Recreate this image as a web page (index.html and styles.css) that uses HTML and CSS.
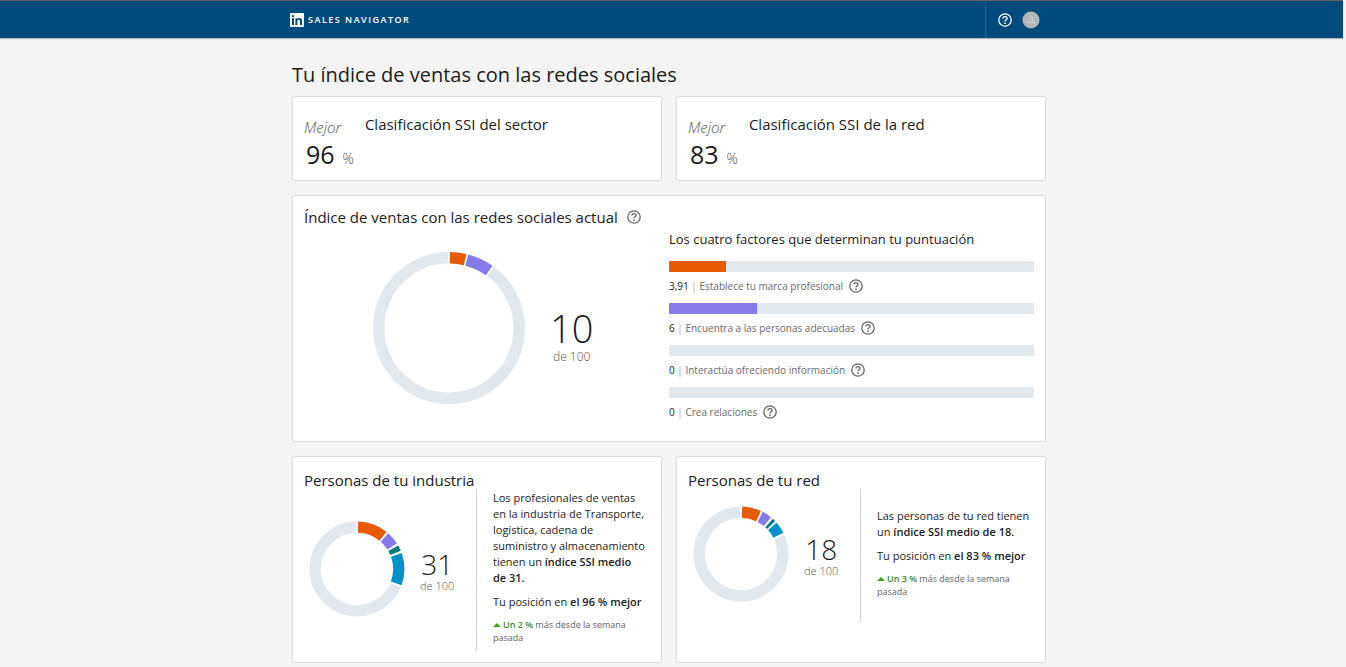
FILE: index.html
```html
<!DOCTYPE html>
<html lang="es">
<head>
<meta charset="utf-8">
<title>Sales Navigator</title>
<link rel="stylesheet" href="styles.css">
</head>
<body>
<svg class="sprite" aria-hidden="true">
  <symbol id="help" viewBox="0 0 14 14">
    <circle cx="7" cy="7" r="6.2" fill="none" stroke="currentColor" stroke-width="1.3"/>
    <path d="M4.9 5.6C4.9 4.3 5.8 3.6 7 3.6S9.1 4.3 9.1 5.4C9.1 6.8 7 6.7 7 8.4" fill="none" stroke="currentColor" stroke-width="1.3"/>
    <circle cx="7" cy="10.2" r=".85" fill="currentColor"/>
  </symbol>
</svg>
<header class="topbar">
  <div class="topbar-inner">
    <a class="brand" href="#">
      <svg class="brand-logo" viewBox="0 0 14 14" aria-hidden="true">
        <rect width="14" height="14" rx="1" fill="#fff"/>
        <path d="M2 5.3h2V12H2zM3 2a1.15 1.15 0 1 1 0 2.3A1.15 1.15 0 0 1 3 2zM5.4 5.3h1.9v.9c.4-.7 1.1-1.1 2-1.1 2 0 2.7 1.2 2.7 3.2V12h-2V8.600c0-1-.2-1.800-1.200-1.800S7.400 7.600 7.400 8.500V12h-2z" fill="#004b7c"/>
      </svg>
      <span>SALES NAVIGATOR</span>
    </a>
    <div class="topbar-actions">
      <button class="help help-light" type="button" aria-label="Ayuda"><svg><use href="#help"/></svg></button>
      <button class="avatar" type="button" aria-label="Perfil">
        <svg viewBox="0 0 18 18"><circle cx="9" cy="9" r="8.500" fill="#b3b6b9"/><path d="M9 5.500a1.600 1.600 0 0 1 1 2.900c-.3.300-.2.800.2 1l1.500.9c.4.200.6.500.6 1.200H5.700c0-.7.200-1 .6-1.200l1.500-.9c.4-.2.500-.7.200-1a1.600 1.600 0 0 1 1-2.900z" fill="none" stroke="#d5d7d9" stroke-width=".9"/></svg>
      </button>
    </div>
  </div>
</header>
<main class="page">
  <h1 class="page-title">Tu índice de ventas con las redes sociales</h1>
  <div class="grid">
    <section class="card rank">
      <div class="rank-score"><em>Mejor</em><p><span class="rank-num">96</span> <span class="rank-pct">%</span></p></div>
      <h2 class="card-title">Clasificación SSI del sector</h2>
    </section>
    <section class="card rank">
      <div class="rank-score"><em>Mejor</em><p><span class="rank-num">83</span> <span class="rank-pct">%</span></p></div>
      <h2 class="card-title">Clasificación SSI de la red</h2>
    </section>

    <section class="card current">
      <div class="current-left">
        <div class="title-row">
          <h2 class="card-title">Índice de ventas con las redes sociales actual</h2>
          <button class="help" type="button" aria-label="Más información"><svg><use href="#help"/></svg></button>
        </div>
        <div class="current-chart">
          <svg class="donut-large" viewBox="0 0 152 152" role="img" aria-label="10 de 100">
            <g transform="rotate(-90 76 76)" fill="none" stroke-width="11.500">
              <circle cx="76" cy="76" r="70.200" pathLength="100" stroke="#e1e8ee" stroke-dasharray="89.700 10.300" stroke-dashoffset="-10.100"/>
              <circle cx="76" cy="76" r="70.200" pathLength="100" stroke="#e65a00" stroke-dasharray="3.500 96.500" stroke-dashoffset="-.2"/>
              <circle cx="76" cy="76" r="70.200" pathLength="100" stroke="#867be8" stroke-dasharray="5.600 94.400" stroke-dashoffset="-4.100"/>
            </g>
          </svg>
          <div class="score score-large"><strong>10</strong><span>de 100</span></div>
        </div>
      </div>
      <div class="factors">
        <h3 class="factors-title">Los cuatro factores que determinan tu puntuación</h3>
        <ul>
          <li><div class="bar"><div class="bar-fill orange" style="width:15.640%"></div></div>
            <div class="factor"><span><b>3,91</b> <i>|</i> Establece tu marca profesional</span><button class="help" type="button" aria-label="Más información"><svg><use href="#help"/></svg></button></div></li>
          <li><div class="bar"><div class="bar-fill purple" style="width:24%"></div></div>
            <div class="factor"><span><b>6</b> <i>|</i> Encuentra a las personas adecuadas</span><button class="help" type="button" aria-label="Más información"><svg><use href="#help"/></svg></button></div></li>
          <li><div class="bar"></div>
            <div class="factor"><span><b>0</b> <i>|</i> Interactúa ofreciendo información</span><button class="help" type="button" aria-label="Más información"><svg><use href="#help"/></svg></button></div></li>
          <li><div class="bar"></div>
            <div class="factor"><span><b>0</b> <i>|</i> Crea relaciones</span><button class="help" type="button" aria-label="Más información"><svg><use href="#help"/></svg></button></div></li>
        </ul>
      </div>
    </section>

    <section class="card people">
      <h2 class="card-title">Personas de tu industria</h2>
      <div class="people-body">
        <div class="people-chart">
          <svg class="donut-small" viewBox="0 0 96 96" role="img" aria-label="31 de 100">
            <g transform="rotate(-90 48 48)" fill="none" stroke-width="11.300">
              <circle cx="48" cy="48" r="41.800" pathLength="100" stroke="#e1e8ee" stroke-dasharray="68.300 31.700" stroke-dashoffset="-31.300"/>
              <circle cx="48" cy="48" r="41.800" pathLength="100" stroke="#e65a00" stroke-dasharray="10.300 89.700" stroke-dashoffset="-.4"/>
              <circle cx="48" cy="48" r="41.800" pathLength="100" stroke="#867be8" stroke-dasharray="4.500 95.500" stroke-dashoffset="-11.400"/>
              <circle cx="48" cy="48" r="41.800" pathLength="100" stroke="#067a87" stroke-dasharray="2 98" stroke-dashoffset="-16.700"/>
              <circle cx="48" cy="48" r="41.800" pathLength="100" stroke="#0091ca" stroke-dasharray="11.100 88.900" stroke-dashoffset="-19.500"/>
            </g>
          </svg>
          <div class="score"><strong>31</strong><span>de 100</span></div>
        </div>
        <div class="people-text">
          <p>Los profesionales de ventas en la industria de Transporte, logística, cadena de suministro y almacenamiento tienen un <b>índice SSI medio de&nbsp;31.</b></p>
          <p>Tu posición en <b>el 96 % mejor</b></p>
          <p class="trend"><span class="up" aria-hidden="true"></span><b>Un 2 %</b> más desde la semana pasada</p>
        </div>
      </div>
    </section>
    <section class="card people">
      <h2 class="card-title">Personas de tu red</h2>
      <div class="people-body">
        <div class="people-chart">
          <svg class="donut-small" viewBox="0 0 96 96" role="img" aria-label="18 de 100">
            <g transform="rotate(-90 48 48)" fill="none" stroke-width="11.300">
              <circle cx="48" cy="48" r="41.800" pathLength="100" stroke="#e1e8ee" stroke-dasharray="81.300 18.700" stroke-dashoffset="-18.300"/>
              <circle cx="48" cy="48" r="41.800" pathLength="100" stroke="#e65a00" stroke-dasharray="6.500 93.500" stroke-dashoffset="-.4"/>
              <circle cx="48" cy="48" r="41.800" pathLength="100" stroke="#867be8" stroke-dasharray="3.300 96.700" stroke-dashoffset="-7.600"/>
              <circle cx="48" cy="48" r="41.800" pathLength="100" stroke="#067a87" stroke-dasharray="1.100 98.900" stroke-dashoffset="-11.700"/>
              <circle cx="48" cy="48" r="41.800" pathLength="100" stroke="#0091ca" stroke-dasharray="4.100 95.900" stroke-dashoffset="-13.500"/>
            </g>
          </svg>
          <div class="score"><strong>18</strong><span>de 100</span></div>
        </div>
        <div class="people-text">
          <p>Las personas de tu red tienen un <b>índice SSI medio de 18.</b></p>
          <p>Tu posición en <b>el 83 % mejor</b></p>
          <p class="trend"><span class="up" aria-hidden="true"></span><b>Un 3 %</b> más desde la semana pasada</p>
        </div>
      </div>
    </section>
  </div>
</main>
</body>
</html>
```
FILE: styles.css
```css
* { box-sizing: border-box; }
body {
  margin: 0;
  padding-right: 3px;
  background: #f4f4f4;
  color: #1b1b1b;
  font-family: "Open Sans", "Noto Sans", sans-serif;
  font-size: 12px;
}
h1, h2, h3, p, ul { margin: 0; padding: 0; font-weight: 400; }
ul { list-style: none; }
button { padding: 0; border: 0; background: none; cursor: pointer; }
svg { display: block; }
b { font-weight: 600; }
.sprite { position: absolute; width: 0; height: 0; }

.topbar {
  background: #004b7c;
  border-top: 1px solid #5f6062;
  box-shadow: 0 1px 1px #b4b8bb;
}
.topbar-inner {
  display: flex;
  justify-content: space-between;
  max-width: 763px;
  height: 37px;
  margin: 0 auto;
}
.brand {
  display: flex;
  align-items: center;
  gap: 4px;
  color: #fff;
  font-size: 9px;
  font-weight: 600;
  letter-spacing: 1.500px;
  text-decoration: none;
}
.brand-logo { width: 14px; height: 14px; }
.topbar-actions {
  display: flex;
  align-items: center;
  gap: 10px;
  padding: 0 13px 0 12px;
  border-left: 1px solid #246592;
}
.help { flex: none; width: 14px; height: 14px; color: #666; }
.help svg { width: 100%; height: 100%; }
.help-light { color: #fff; }
.avatar svg { width: 18px; height: 18px; }

.page { max-width: 763px; margin: 0 auto; padding: 23px 7px 4px 2px; }
.page-title { margin-bottom: 7px; font-size: 20px; line-height: 28px; }
.grid { display: grid; grid-template-columns: 1fr 1fr; gap: 14px; }
.card {
  padding: 10px 11px;
  background: #fff;
  border: 1px solid #dcdcdc;
  border-radius: 2px;
}
.card-title { font-size: 15px; line-height: 22px; }

.rank { display: flex; gap: 11px; padding: 16px 11px 13px; }
.rank-score em { display: block; color: #555; font-size: 15px; font-weight: 300; line-height: 28px; }
.rank-score p { display: flex; align-items: baseline; gap: 8px; padding-left: 2px; line-height: 26px; }
.rank-num { font-size: 25px; }
.rank-pct { color: #555; font-size: 14px; font-weight: 300; line-height: 14px; }

.current { grid-column: 1 / -1; display: grid; grid-template-columns: 365px 1fr; padding-bottom: 12px; }
.title-row { display: flex; align-items: center; gap: 9px; }
.current-chart { display: flex; align-items: center; gap: 25px; padding: 24px 0 0 69px; }
.donut-large { width: 152px; height: 152px; }
.score { display: flex; flex-direction: column; align-items: center; padding-top: 4px; color: #555; }
.score strong { color: #1b1b1b; font-size: 28px; font-weight: 300; line-height: 30px; }
.score span { font-size: 11px; font-weight: 300; line-height: 14px; }
.score-large { padding-top: 13px; }
.score-large strong { font-size: 38px; line-height: 44px; }
.score-large span { font-size: 12px; }

.factors { padding-top: 24px; }
.factors-title { margin-bottom: 12px; font-size: 13px; font-weight: 500; line-height: 19px; }
.bar { height: 11px; overflow: hidden; border-radius: 1px; background: #e1e8ee; }
.bar-fill { height: 100%; }
.orange { background: #e65a00; }
.purple { background: #867be8; }
.factor { display: flex; align-items: center; gap: 6px; height: 31px; padding-bottom: 4px; color: #6a6a6a; font-size: 10px; }
.factor b { color: #1b1b1b; font-weight: 500; }
.factor i { color: #c9a0a0; font-style: normal; }

.people { padding: 12px 11px 11px; }
.people-body { display: grid; grid-template-columns: 172px 1fr; margin-top: -2px; }
.people-chart { display: flex; align-items: center; gap: 15px; padding: 17px 0 20px 5px; }
.donut-small { width: 96px; height: 96px; }
.people-text {
  display: flex;
  flex-direction: column;
  justify-content: center;
  gap: 8px;
  padding: 1px 0 7px 16px;
  border-left: 1px solid #d0d0d0;
}
.people-text p { font-size: 11px; line-height: 16px; }
.people-text .trend { color: #666; font-size: 9px; line-height: 13px; }
.trend b { color: #3f8a2c; }
.up {
  display: inline-block;
  margin-right: 2px;
  border: 4px solid transparent;
  border-top: 0;
  border-bottom-color: #44a01f;
  vertical-align: 1px;
}
```
